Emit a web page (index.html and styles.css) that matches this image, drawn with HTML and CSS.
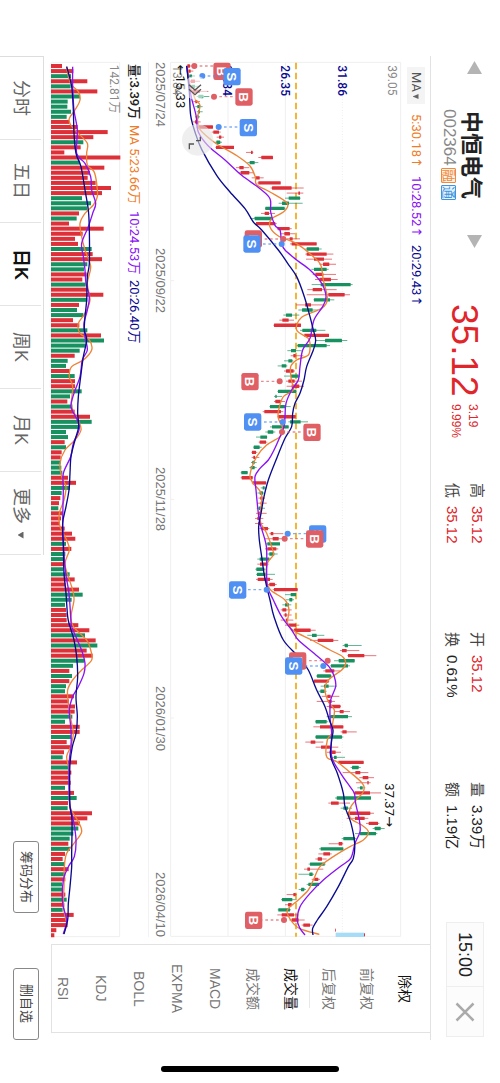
FILE: index.html
```
<!DOCTYPE html>
<html lang="zh-CN">
<head>
<meta charset="utf-8">
<meta name="viewport" content="width=device-width, initial-scale=1">
<title>中恒电气 002364</title>
<link rel="stylesheet" href="styles.css">
</head>
<body>
<div class="screen">
  <header class="header">
    <div class="stock">
      <button class="step" type="button" aria-label="上一只"><svg class="tri" viewBox="0 0 15 13"><path d="M7.500 0 15 13H0z"/></svg></button>
      <div class="stock-id">
        <h1 class="stock-name">中恒电气</h1>
        <div class="stock-code"><span>002364</span><span class="tag tag-margin">融</span><span class="tag tag-link">通</span></div>
      </div>
      <button class="step" type="button" aria-label="下一只"><svg class="tri" viewBox="0 0 15 13"><path d="M0 0H15L7.500 13z"/></svg></button>
    </div>
    <div class="quote">
      <span class="price">35.12</span>
      <div class="change"><span>3.19</span><span>9.99%</span></div>
    </div>
    <dl class="stats">
      <div class="stat"><dt>高</dt><dd class="up">35.12</dd></div>
      <div class="stat"><dt>低</dt><dd class="up">35.12</dd></div>
    </dl>
    <dl class="stats">
      <div class="stat"><dt>开</dt><dd class="up">35.12</dd></div>
      <div class="stat"><dt>换</dt><dd>0.61%</dd></div>
    </dl>
    <dl class="stats">
      <div class="stat"><dt>量</dt><dd>3.39万</dd></div>
      <div class="stat"><dt>额</dt><dd>1.19亿</dd></div>
    </dl>
    <div class="clock">
      <time class="clock-time">15:00</time>
      <button class="close" type="button" aria-label="关闭"><svg class="close-icon" viewBox="0 0 20 20"><path d="M1.500 1.500 18.500 18.500M18.500 1.500 1.500 18.500"/></svg></button>
    </div>
  </header>

  <main class="main">
    <section class="charts">
      <div class="legend legend-price">
        <label class="picker"><select class="picker-select" aria-label="指标"><option>MA</option></select><span class="caret"></span></label>
        <span class="ma5">5:30.18↑</span>
        <span class="ma10">10:28.52↑</span>
        <span class="ma20">20:29.43↑</span>
      </div>
      <svg class="chart price-chart" id="price" viewBox="60 0 693 2625" role="img" aria-label="日K线"></svg>
      <div class="dates">
        <span>2025/07/24</span><span>2025/09/22</span><span>2025/11/28</span><span>2026/01/30</span><span>2026/04/10</span>
      </div>
      <div class="legend legend-volume">
        <span class="vol">量:3.39万</span>
        <span class="ma5">MA 5:23.66万</span>
        <span class="ma10">10:24.53万</span>
        <span class="ma20">20:26.40万</span>
      </div>
      <svg class="chart volume-chart" id="volume" viewBox="0 0 207 2625" role="img" aria-label="成交量"></svg>
    </section>
    <aside class="side">
      <button class="side-item on" type="button">除权</button>
      <button class="side-item" type="button">前复权</button>
      <button class="side-item" type="button">后复权</button>
      <button class="side-item on split" type="button">成交量</button>
      <button class="side-item" type="button">成交额</button>
      <button class="side-item" type="button">MACD</button>
      <button class="side-item" type="button">EXPMA</button>
      <button class="side-item" type="button">BOLL</button>
      <button class="side-item" type="button">KDJ</button>
      <button class="side-item" type="button">RSI</button>
    </aside>
  </main>

  <footer class="footer">
    <nav class="tabs">
      <button class="tab" type="button">分时</button>
      <button class="tab" type="button">五日</button>
      <button class="tab on" type="button">日K</button>
      <button class="tab" type="button">周K</button>
      <button class="tab" type="button">月K</button>
      <button class="tab" type="button">更多<span class="caret"></span></button>
    </nav>
    <div class="actions">
      <button class="action" type="button">筹码分布</button>
      <button class="action" type="button">删自选</button>
    </div>
  </footer>
</div>
<div class="home-bar"></div>
<script src="chart.js"></script>
</body>
</html>
```
FILE: styles.css
```
* {
  box-sizing: border-box;
}

html,
body {
  margin: 0;
  height: 100%;
}

body {
  position: relative;
  writing-mode: vertical-rl;
  text-orientation: sideways;
  background: #fff;
  color: #222;
  font-family: "Liberation Sans", "Noto Sans CJK SC", sans-serif;
  font-size: 15px;
  overflow: hidden;
}

button,
select {
  margin: 0;
  padding: 0;
  border: 0;
  background: none;
  color: inherit;
  font: inherit;
  writing-mode: inherit;
  text-orientation: inherit;
  appearance: none;
}

svg {
  display: block;
  writing-mode: horizontal-tb;
}

.screen {
  display: flex;
  flex-direction: column;
  width: 100vw;
  height: 100vh;
  padding: 56px 0 43px;
}

/* header */

.header {
  display: grid;
  grid-template-columns: 248px 179px 149px 150px 1fr auto;
  flex: 1 0 auto;
  align-items: center;
  padding: 0 2px 3px 0;
}

.stock {
  display: flex;
  align-items: flex-start;
  gap: 35px;
  padding: 5px 8px 0 0;
}

.step {
  padding-right: 1px;
}

.tri {
  width: 15px;
  height: 13px;
  fill: #b4b4b4;
}

.stock-id {
  display: flex;
  flex-direction: column;
  width: 44px;
  gap: 1px;
}

.stock-name {
  margin: 0;
  font-size: 22px;
  line-height: 24px;
  font-weight: 700;
  padding-top: 2px;
}

.stock-code {
  display: flex;
  align-items: center;
  gap: 2px;
  color: #888;
  font-size: 17px;
  line-height: 18px;
}

.tag {
  border: 1px solid;
  border-radius: 1px;
  font-size: 13px;
  line-height: 13px;
  height: 15px;
}

.tag-margin {
  color: #f08a3c;
  background: #fff3e8;
}

.tag-link {
  color: #3f95dc;
  background: #e8f4ff;
}

.quote {
  display: flex;
  align-items: center;
  gap: 7px;
  padding-right: 2px;
  color: #e0262b;
}

.price {
  font-size: 37px;
  line-height: 38px;
}

.change {
  display: flex;
  flex-direction: column;
  font-size: 12px;
  line-height: 17px;
}

.stats {
  display: flex;
  flex-direction: column;
  margin: 0;
  line-height: 25px;
}

.stat {
  display: flex;
  gap: 8px;
}

.stat dt {
  color: #444;
}

.stat dd {
  margin: 0;
}

.stat .up {
  color: #e0262b;
}

.clock {
  display: flex;
  width: 38px;
  border: 1px solid #eee;
  background: #fcfcfc;
}

.clock-time {
  padding: 9px 0;
  border-bottom: 1px solid #eee;
  font-size: 18px;
  line-height: 36px;
}

.close {
  display: grid;
  place-items: center;
  height: 49px;
}

.close-icon {
  width: 20px;
  height: 20px;
  fill: none;
  stroke: #aaa;
  stroke-width: 2.5;
}

/* charts and indicator list */

.main {
  display: flex;
  border-right: 1px solid #e2e2e2;
}

.charts {
  display: flex;
  flex: 1;
  flex-direction: column;
  min-height: 0;
  padding: 6px 0 7px;
}

.legend {
  display: flex;
  align-items: center;
  width: 29px;
  font-family: Roboto, "DejaVu Sans", "Noto Sans CJK SC", sans-serif;
  font-size: 13px;
  line-height: 16px;
  white-space: nowrap;
}

.legend-price {
  gap: 8px;
  padding-top: 5px;
}

.legend-volume {
  gap: 6px;
  padding-top: 2px;
  border-right: 1px solid #f2f2f2;
}

.vol {
  font-weight: 500;
}

.ma5 {
  color: #f07c28;
}

.ma10 {
  color: #8a12f5;
}

.ma20 {
  color: #0a0a90;
}

.picker {
  display: flex;
  align-items: center;
  gap: 2px;
  height: 37px;
  width: 18px;
  padding: 5px 0;
  background: #f4f4f4;
  color: #555;
  margin-bottom: 2px;
}

.picker-select {
  height: 21px;
  overflow: hidden;
  line-height: 18px;
}

.caret {
  width: 6px;
  height: 7px;
  background: #666;
  clip-path: polygon(100% 0, 100% 100%, 0 50%);
}

.chart {
  height: 100%;
  overflow: visible;
}

.price-chart {
  width: 231px;
}

.volume-chart {
  width: 69px;
}

.dates {
  display: grid;
  grid-template-columns: 1fr 2fr 2fr 2fr 1fr;
  width: 21px;
  color: #777;
  font-size: 13px;
  line-height: 20px;
  text-align: center;
  white-space: nowrap;
}

.dates span:first-child {
  text-align: start;
}

.dates span:last-child {
  justify-self: end;
}

.side {
  display: flex;
  flex-direction: column;
  width: 379px;
  height: 89px;
  margin-bottom: 7px;
  padding-right: 6px;
  overflow: hidden;
  border: solid #e2e2e2;
  border-width: 1px 0 1px 1px;
}

.side-item {
  flex: 0 0 38px;
  color: #777;
  font-size: 14px;
  line-height: 38px;
  text-align: center;
}

.side-item.on {
  color: #111;
}

.split {
  background: linear-gradient(#e8e8e8, #e8e8e8) 100% 50% / 1px 39px no-repeat;
}

/* period tabs */

.footer {
  display: flex;
  justify-content: space-between;
  margin-right: 7px;
  width: 44px;
}

.tabs {
  display: flex;
  padding-right: 2px;
  border: solid #ddd;
  border-width: 1px 1px 0 0;
}

.tab {
  display: flex;
  align-items: center;
  justify-content: center;
  gap: 8px;
  height: 83px;
  border-bottom: 1px solid #e4e4e4;
  color: #666;
  font-size: 18px;
  line-height: 40px;
}

.tab.on {
  color: #111;
  font-weight: 700;
}

.actions {
  display: flex;
  align-items: center;
  gap: 55px;
  padding-left: 7px;
}

.action {
  width: 26px;
  height: 72px;
  border: 1px solid #888;
  border-radius: 3px;
  color: #444;
  font-size: 13px;
  line-height: 24px;
}

.home-bar {
  position: absolute;
  left: 50%;
  bottom: 11px;
  width: 178px;
  height: 6px;
  margin-left: -89px;
  border-radius: 3px;
  background: #000;
}

/* chart parts, drawn at three units per pixel */

.grid {
  fill: none;
  stroke: #efefef;
  stroke-width: 3;
}

.grid-dot {
  stroke: #ddd;
  stroke-width: 2;
  stroke-dasharray: 2 6;
}

.level {
  stroke: #f2b63a;
  stroke-width: 6;
  stroke-dasharray: 20 10;
}

.R {
  fill: #dd3038;
  stroke: #dd3038;
}

.G {
  fill: #17915f;
  stroke: #17915f;
}

.bar {
  stroke: none;
}

.wick {
  stroke-width: 2;
}

.line {
  fill: none;
  stroke-width: 4;
  stroke-linejoin: round;
}

.line5 {
  stroke: #ee8438;
}

.line10 {
  stroke: #8a12f5;
}

.line20 {
  stroke: #0a0a90;
}

.axis {
  font: 36px Roboto, "Liberation Sans", "Noto Sans CJK SC", sans-serif;
  fill: #888;
}

.axis-blue {
  fill: #0a0a90;
  font-weight: 500;
}

.extreme {
  font: 39px Roboto, "DejaVu Sans", sans-serif;
  fill: #111;
}

.buy {
  fill: #df5f64;
  stroke: #df5f64;
}

.sell {
  fill: #4f90f2;
  stroke: #4f90f2;
}

.tie {
  stroke-width: 4;
  stroke-dasharray: 8 8;
  opacity: .7;
}

.flag {
  stroke: none;
}

.flag-text {
  font: 700 40px "Liberation Sans", sans-serif;
  fill: #fff;
  text-anchor: middle;
}

.today {
  fill: #a6dcf8;
}

.float {
  fill: #e4e4e4;
  opacity: .6;
}

.float-light {
  fill: #fff;
  opacity: .6;
}

.float-icon {
  fill: none;
  stroke: #555;
  stroke-width: 4;
}
```
FILE: chart.js
```
const NS = 'http://www.w3.org/2000/svg';
const FIRST = 12;
const STEP = 15.25;

function add(parent, tag, attrs, text) {
  const el = document.createElementNS(NS, tag);
  for (const k in attrs) el.setAttribute(k, attrs[k]);
  if (text) el.textContent = text;
  parent.appendChild(el);
  return el;
}

function label(parent, cls, x, y, text) {
  add(parent, 'text', { class: cls, transform: `translate(${x} ${y}) rotate(90)` }, text);
}

// Smooth curve through [x, y] points.
function curve(parent, cls, pts) {
  let d = `M${pts[0]}`;
  for (let i = 0; i < pts.length - 1; i++) {
    const p = pts[Math.max(i - 1, 0)], a = pts[i], b = pts[i + 1], n = pts[Math.min(i + 2, pts.length - 1)];
    d += `C${a[0] + (b[0] - p[0]) / 6} ${a[1] + (b[1] - p[1]) / 6} ${b[0] - (n[0] - a[0]) / 6} ${b[1] - (n[1] - a[1]) / 6} ${b}`;
  }
  add(parent, 'path', { class: 'line ' + cls, d });
}

// "x y x y ..." with both values shifted.
function points(str, dx, dy) {
  const v = str.trim().split(/\s+/).map(Number), out = [];
  for (let i = 0; i < v.length; i += 2) out.push([v[i] + dx, v[i + 1] + dy]);
  return out;
}

// Each day: colour, low, body start, body end, high.
const days = `R108 112 120 128,R110 115 122 130,G112 118 126 135,R118 122 135 150,G120 124 135 150,R120 126 150 175,G140 145 160 178,R130 136 142 150,G136 142 150 158,G140 144 150 158,G135 140 146 150,R128 135 142 152,
R140 145 189 189,R185 190 207 212,R200 207 214 222,G195 199 211 216,R196 198 252 252,R288 303 308 310,R325 334 369 369,G292 299 314 325,R258 268 281 298,R265 272 298 310,R305 316 329 341,R322 325 392 392,
R362 366 425 461,R410 445 450 460,G405 416 450 452,G386 396 417 458,G345 346 404 406,R333 344 357 375,G300 314 366 370,R315 318 376 380,R380 383 419 425,R390 403 420 435,R410 419 428 450,R420 425 500 500,
G466 470 507 515,R466 470 530 550,R468 492 522 546,R508 519 538 558,G484 492 530 536,R488 496 520 558,R495 508 543 563,G485 512 602 608,R472 488 516 560,R470 535 584 600,G490 492 540 553,R438 465 483 520,
G445 456 488 505,G400 408 426 448,R388 397 416 432,R370 372 453 453,G450 457 499 526,R460 463 537 537,G497 525 576 592,G440 443 530 540,G412 423 438 455,R422 430 437 460,G402 415 427 430,G383 395 409 412,
R402 408 431 435,G402 423 446 450,R408 415 434 456,R410 425 448 462,G382 384 439 440,G372 376 380 396,R372 376 392 405,G358 360 405 422,R338 343 393 400,R382 384 437 437,G415 420 452 474,G360 366 416 416,
G346 353 370 376,G318 331 351 352,R326 329 348 352,G310 311 329 335,R304 306 318 322,R305 310 315 328,G303 307 314 320,G298 302 314 320,G272 274 293 293,R272 275 308 310,R305 308 348 350,G332 338 344 350,
G322 329 339 342,R325 331 338 345,R322 332 338 350,G320 326 334 345,R318 326 333 350,R315 322 330 340,R315 325 331 340,R328 336 354 358,R358 362 370 400,R345 368 386 400,G348 352 390 390,R345 352 379 385,
G352 358 373 383,G322 329 358 362,R322 330 352 356,G316 319 343 347,G318 321 347 375,R318 323 360 368,R350 358 375 380,R368 372 443 443,G405 422 438 438,G408 418 427 432,G397 405 417 424,R392 397 409 425,
R400 404 410 425,R392 408 413 430,R405 415 438 448,R425 432 482 497,G472 486 500 523,R480 503 550 565,G578 584 594 635,R570 576 590 628,R592 594 643 679,G552 566 614 614,G540 543 594 600,R520 526 553 570,
G498 501 543 546,R488 492 536 538,G512 522 536 560,G505 511 524 530,R515 532 542 568,R500 534 545 555,R530 538 571 573,R553 569 581 600,G530 541 594 606,G495 497 530 535,R490 510 580 580,R572 577 590 620,
G495 497 576 580,R466 482 496 520,R497 513 540 565,R530 539 557 573,G540 552 560 585,R562 565 641 641,G602 606 626 632,R578 616 631 655,R628 638 655 672,R618 652 656 662,G622 630 638 646,R610 614 660 693,
G555 560 663 663,R535 543 566 600,G572 580 594 606,R590 594 661 672,R590 615 644 655,R648 656 684 688,G668 674 692 704,G615 630 678 682,G575 580 615 620,R536 566 577 580,G507 512 580 580,R505 520 540 545,
R496 503 516 530,G476 480 524 527,R462 472 480 520,G445 478 488 492,R485 493 505 510,G470 475 507 507,G446 453 463 468,R410 430 437 440,G393 396 427 440,R405 414 425 430,G383 385 420 423,R382 395 432 445,
R418 425 446 464,R455 460 480 488,R555 556 558 558`.split(',').map(s => s.trim());

const volumes = `R186 R220 G213 R262 G212 R292 G240 G203 G202 G213 G200 R207 R233 R323 R280 G250 R242 R193 R361 G240 R313 R270 R263 R287 R333 R306 G246 G273 G262 R237 G230 R207 R311 R248 R225 R234 G275 R278 R306 G262
G252 R260 R247 G257 R262 R310 G262 R237 G231 G250 R219 R238 G262 R303 G312 G258 G239 R224 G203 G198 R209 G224 R225 R225 G245 G210 R202 G217 R224 R270 G275 G240 G198 G204 R194 G198 R185 R182 G182 G184
G187 R204 R228 G210 G185 R181 R177 G175 R188 R183 R180 R194 R216 R226 G198 R214 G196 G193 R190 G190 G209 R224 R197 R237 G248 G215 G195 R198 R200 R200 R235 R268 G255 R287 G292 R260 R278 G252 G219 R208
G216 R208 G198 G195 R222 R207 R225 R224 G217 G195 R239 R239 G213 R200 R210 R192 G188 R231 G210 R214 R210 R212 G195 R222 G230 R204 G203 R276 R262 R240 G235 G220 G209 R205 G210 R195 R188 G194 R206 G196
R196 G186 G188 R196 G200 R193 G188 R221 R203 R203 R169 R163`.split(/\s+/);

/* price chart */
const price = document.getElementById('price');
add(price, 'path', { class: 'grid', d: 'M62 1H752V2623H62zM234 0V2624M406 0V2624' });
add(price, 'path', { class: 'grid-dot', d: 'M577 0V2624' });
add(price, 'path', { class: 'grid', d: 'M62 656H72M62 1312H72M62 1968H72' });
add(price, 'path', { class: 'level', d: 'M438 2V2624' });
label(price, 'axis', 714, 10, '39.05');
label(price, 'axis axis-blue', 563, 10, '31.86');
label(price, 'axis axis-blue', 392, 10, '26.35');
label(price, 'axis axis-blue', 220, 10, '20.84');
label(price, 'axis', 69, 10, '13.84');

days.forEach((s, i) => {
  const c = s[0], v = s.slice(1).split(' ').map(Number), y = FIRST + STEP * i;
  add(price, 'path', { class: 'wick ' + c, d: `M${v[0]} ${y}H${v[3]}` });
  add(price, 'rect', { class: 'bar ' + c, x: v[1], y: y - 5, width: v[2] - v[1], height: 10, rx: 1 });
});
add(price, 'rect', { class: 'today', x: 557, y: 2612, width: 86, height: 13 });
add(price, 'rect', { class: 'bar R', x: 642, y: 2614, width: 3, height: 9 });

curve(price, 'line5', [
  ...points('112 12 118 60 135 110 150 130 143 165 148 200 185 235 210 252 262 282 300 312 316 345 320 368 360 390 412 424 400 450 365 470 360 495 385 522', 0, 0),
  ...points('440 41 490 80 512 104 520 150 532 205 515 235 455 262 440 300 475 325 480 345 475 375 440 390 422 410 424 450 430 480 400 500 386 540 385 565 400 600 390 620 350 645', 0, 504),
  ...points('320 50 300 105 310 130 335 165 330 240 350 280 365 320 370 345 352 370 350 420 362 450 405 480 417 510 413 550 435 575', 0, 1134),
  ...points('485 0 540 30 578 50 587 70 575 90 535 120 525 150 535 185 553 210 548 250 545 280 532 300 530 350 560 365 592 390 637 430 640 455 618 480 600 505 602 535 635 555 655 575 640 600 600 620 550 650 510 680 490 720 475 750 445 780 412 810 422 840 448 865 508 883', 0, 1734)
]);
curve(price, 'line10', [
  ...points('110 12 118 70 125 110 138 160 145 210 175 252 225 294 275 340 330 380 360 410 362 450 375 490', 0, 0),
  ...points('390 0 395 40 405 60 440 90 480 120 515 160 528 200 518 230 492 270 480 325 458 360 450 410 445 450 425 480 408 520 405 560 402 590 390 620', 0, 504),
  ...points('372 30 355 60 330 85 315 110 318 150 325 220 330 250 345 300 350 330 350 400 352 440 370 480 395 530 425 570', 0, 1134),
  ...points('445 0 492 40 537 80 553 110 557 140 542 180 540 230 545 280 545 350 572 400 600 440 613 460 617 490 628 540 630 575 615 610 602 655 570 680 520 720 480 760 450 800 442 840 450 865 465 885', 0, 1734)
]);
curve(price, 'line20', [
  ...points('110 12 118 90 122 160 135 210 155 262 200 340 240 390 285 440 310 480', 0, 0),
  ...points('335 0 385 60 413 100 440 140 463 200 480 260 490 300 497 330 490 360 470 410 462 450 450 490 435 520 428 550 425 590 405 625', 0, 504),
  ...points('378 60 355 120 342 170 333 220 326 260 328 300 335 350 342 400 350 440 360 480 372 530', 0, 1134),
  ...points('400 0 445 50 475 90 500 150 525 200 538 240 549 270 545 300 542 350 562 400 580 460 585 500 603 550 614 610 610 655 595 680 565 740 530 800 502 840 488 865 489 885', 0, 1734)
]);

label(price, 'extreme', 79, 8, '←15.33');
label(price, 'extreme', 706, 2164, '37.37→');

// Trades: side, box x, box y, dot x, dot y.
[
  ['B', 190, 2, 133, 12], ['S', 220, 18, 157, 42], ['B', 256, 79, 192, 104], ['S', 269, 171, 206, 195],
  ['B', 284, 505, 400, 531], ['S', 280, 520, 395, 546], ['B', 274, 933, 389, 958], ['S', 282, 1054, 398, 1080], ['B', 460, 1085, 396, 1110],
  ['S', 477, 1390, 413, 1415], ['B', 468, 1405, 404, 1430], ['S', 237, 1558, 350, 1583],
  ['B', 417, 1771, 533, 1796], ['S', 405, 1786, 520, 1812], ['B', 285, 2549, 402, 2574]
].forEach(([side, x, y, dx, dy]) => {
  const cls = side === 'B' ? 'buy' : 'sell';
  add(price, 'path', { class: 'tie ' + cls, d: `M${dx} ${dy}H${dx > x ? x + 52 : x}` });
  add(price, 'circle', { class: 'flag ' + cls, cx: dx, cy: dy, r: 9 });
  add(price, 'rect', { class: 'flag ' + cls, x, y, width: 52, height: 52, rx: 7 });
  label(price, 'flag-text', x + 12, y + 26, side);
});

add(price, 'circle', { class: 'float-light', cx: 137, cy: 77, r: 36 });
add(price, 'path', { class: 'float-icon', d: 'M117 68 135 84 153 68M117 82 135 98 153 82' });
add(price, 'circle', { class: 'float', cx: 143, cy: 234, r: 47 });
add(price, 'path', { class: 'float-icon', d: 'M118 262V246H132M151 224V236H138' });

/* volume chart */
const volume = document.getElementById('volume');
add(volume, 'path', { class: 'grid', d: 'M1 1H206V2624H1z' });
label(volume, 'axis', 176, 8, '142.81万');
volumes.forEach((s, i) => {
  add(volume, 'rect', { class: 'bar ' + s[0], x: 0, y: FIRST + STEP * i - 6, width: s.slice(1) - 153, height: 12 });
});
curve(volume, 'line5', [
  ...points('200 50 205 80 215 105 235 125 240 150 225 180 208 205 212 225 235 250 262 280 260 310 262 345 282 365 290 400 292 440 280 465 255 490 240 520 245 560 255 600 272 650 262 700 270 750 255 790 235 820 240 850', -153, -36),
  ...points('268 0 275 30 250 60 215 80 208 110 218 140 215 200 235 240 243 270 225 300 195 330 180 370 185 410 198 440 192 480 178 520 180 560 200 600 208 630 195 670 205 710 218 750 222 780 213 830', -153, 834),
  ...points('220 20 260 60 272 90 275 120 245 150 218 180 203 210 205 250 213 300 220 340 212 380 200 410 207 450 208 500 210 560 232 600 245 635 222 670 200 700 193 740 192 800 190 850 195 890 200 910 190 942', -153, 1674)
]);
curve(volume, 'line10', [
  ...points('218 50 218 110 222 180 232 240 230 310 255 340 272 380 275 420 287 460 278 490 265 530 245 580 250 620 255 660 258 700 268 740 262 780 252 820 255 860', -153, -36),
  ...points('262 30 247 60 240 110 222 160 213 200 232 240 237 270 220 310 212 350 190 400 190 450 188 550 190 600 192 640 197 700 207 760 212 830', -153, 834),
  ...points('215 20 232 60 248 100 255 130 252 160 235 200 218 230 208 270 213 330 213 380 208 420 207 500 210 560 220 600 228 660 223 710 205 740 190 780 188 850 200 900 190 942', -153, 1674)
]);
curve(volume, 'line20', [
  ...points('200 50 215 110 220 180 222 250 228 310 243 350 255 420 265 480 268 540 268 640 262 680 260 750 255 800 253 840', -153, -36),
  ...points('260 0 250 50 242 110 235 170 233 220 236 260 225 300 213 350 210 400 207 450 198 500 188 550 190 620 192 700 198 760 203 830', -153, 834),
  ...points('210 20 222 60 230 110 233 170 228 230 232 290 228 340 217 380 210 430 209 500 210 560 216 600 215 700 215 740 210 800 205 850 203 900 192 942', -153, 1674)
]);
```
